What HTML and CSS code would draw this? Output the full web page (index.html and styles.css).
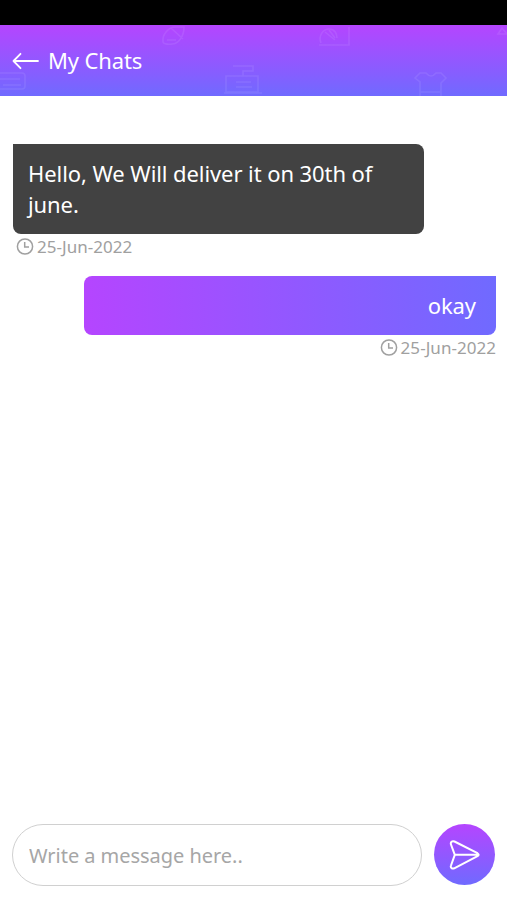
FILE: index.html
```
<!DOCTYPE html>
<html lang="en">
<head>
<meta charset="utf-8">
<title>My Chats</title>
<link rel="stylesheet" href="styles.css">
</head>
<body>
<div class="status-bar"></div>
<header class="header">
  <svg class="pattern" viewBox="0 0 507 71" fill="none" stroke="#fff" stroke-width="1.6" aria-hidden="true">
    <path d="M0 48h22q3 0 3 3v10q0 3-3 3H0M0 54h20M3 60h18"/>
    <path d="M163 17c-1-8 6-15 12-15h9c0 10-6 17-12 17-6 1-9-1-9-2zM171 3l12 11M167 15h9"/>
    <path d="M226 51h32v16h-32zM233 41h20v5h-10v5M236 57h15M236 62h16M224 68h38"/>
    <path d="M319 20h30V2M321 18c-3-7 2-14 8-14s8 5 8 9M325 7l10 8M329 5l6 8"/>
    <path d="M420 71V57l-5-4 5-5h6q5 6 10 0h5l5 5-5 5v13M420 67h21"/>
    <path d="m498 9 4-6 5 6z"/>
  </svg>
  <svg class="back" viewBox="0 0 28 18" fill="none" stroke="#fff" stroke-width="1.8" stroke-linecap="round" stroke-linejoin="round"><path d="M26 9H1.5M8.5 1.8 1.5 9l7 7.2"/></svg>
  <h1 class="title">My Chats</h1>
</header>
<main class="chat">
  <section class="message received">
    <p class="bubble">Hello, We Will deliver it on 30th of june.</p>
    <div class="time"><svg class="clock" viewBox="0 0 18 18" fill="none" stroke="currentColor" stroke-width="1.5"><circle cx="9" cy="8.5" r="7.6"/><path d="M8.7 4V9H13"/></svg><span>25-Jun-2022</span></div>
  </section>
  <section class="message sent">
    <p class="bubble">okay</p>
    <div class="time"><svg class="clock" viewBox="0 0 18 18" fill="none" stroke="currentColor" stroke-width="1.5"><circle cx="9" cy="8.5" r="7.6"/><path d="M8.7 4V9H13"/></svg><span>25-Jun-2022</span></div>
  </section>
</main>
<form class="composer">
  <input class="field" type="text" placeholder="Write a message here..">
  <button class="send" type="button" aria-label="Send"><svg class="plane" viewBox="0 0 32 30" fill="none" stroke="#fff" stroke-width="2" stroke-linejoin="round" stroke-linecap="round"><path d="M5.5 1.5 28.5 13.2Q30.8 14.8 28.5 16.2L5.2 28.3C3 29.2 1.2 27.5 2 25.5L5.8 14.8 2 4.5C1.2 2.2 3.2.5 5.5 1.5ZM5.8 14.8H29"/></svg></button>
</form>
</body>
</html>
```
FILE: styles.css
```
* { box-sizing: border-box; }
body {
  margin: 0;
  height: 900px;
  display: flex;
  flex-direction: column;
  background: #fff;
  color: #fff;
  font-family: "Noto Sans", sans-serif;
  overflow: hidden;
}
.status-bar { height: 25px; background: #000; }
.header {
  position: relative;
  height: 71px;
  display: flex;
  align-items: center;
  gap: 8px;
  padding-left: 12px;
  background: linear-gradient(#b545ff, #706aff);
}
.pattern { position: absolute; inset: 0; width: 507px; height: 71px; opacity: .08; }
.back { width: 28px; height: 18px; }
.title { margin: 0 0 2px; font-size: 22px; font-weight: 400; line-height: 30px; letter-spacing: -.12px; }
.chat {
  flex: 1;
  display: flex;
  flex-direction: column;
  gap: 17px;
  padding: 48px 11px 0 13px;
}
.message { display: flex; flex-direction: column; }
.bubble { width: 411px; margin: 0; font-size: 22px; line-height: 31px; letter-spacing: -.085px; }
.received .bubble {
  height: 90px;
  padding: 14px 15px;
  border-radius: 0 8px 8px 8px;
  background: #424242;
}
.sent { align-items: flex-end; }
.sent .bubble {
  width: 412px;
  height: 59px;
  padding: 14px 20px;
  text-align: right;
  border-radius: 8px 0 8px 8px;
  background: linear-gradient(90deg, #b545ff, #706aff);
}
.time {
  display: flex;
  align-items: center;
  gap: 3px;
  height: 25px;
  color: #a0a0a0;
  font-size: 17px;
  letter-spacing: .04px;
}
.received .time { padding-left: 3px; }
.clock { width: 18px; height: 18px; }
.composer {
  display: flex;
  gap: 12px;
  padding: 0 12px 14px;
}
.field {
  width: 410px;
  height: 62px;
  padding: 1px 16px 0;
  border: 1px solid #d0d0d0;
  border-radius: 31px;
  background: #fff;
  color: #424242;
  font: 20px "Noto Sans", sans-serif;
  letter-spacing: -.04px;
}
.field::placeholder { color: #a6a6a6; opacity: 1; }
.send {
  display: flex;
  align-items: center;
  justify-content: center;
  width: 61px;
  height: 61px;
  padding: 0;
  border: 0;
  border-radius: 50%;
  background: linear-gradient(#b545ff, #706aff);
}
.plane { width: 32px; height: 30px; }
```
